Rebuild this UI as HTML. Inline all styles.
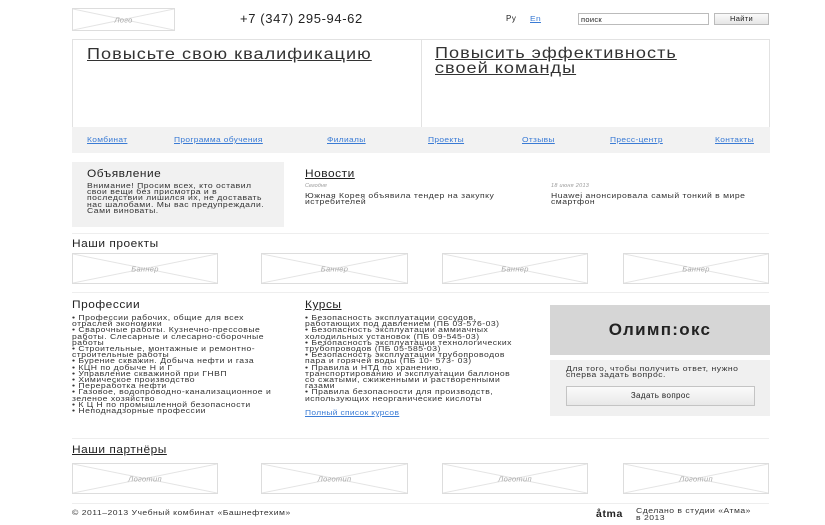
<!DOCTYPE html>
<html><head><meta charset="utf-8"><style>
*{margin:0;padding:0;box-sizing:border-box}
body{width:825px;height:525px;background:#fff;font-family:"Liberation Sans",Arial,sans-serif;color:#222;position:relative;overflow:hidden}
.a{position:absolute;white-space:nowrap}
.ph{position:absolute;border:1px solid #ddd}
.ph svg{position:absolute;left:0;top:0;width:100%;height:100%}
.ph span{position:absolute;left:0;right:0;top:50%;transform:translateY(-50%);text-align:center;font-style:italic;font-size:7.5px;letter-spacing:.3px;color:#aaa}
.nav{font-size:7.5px;letter-spacing:.3px;color:#3a7bd5;text-decoration:underline;transform:scaleX(1.12);transform-origin:0 0}
.line{position:absolute;left:72px;width:697px;height:1px;background:#eee}
.lst{position:absolute;font-size:7px;letter-spacing:.4px;line-height:6.2px;color:#333;white-space:nowrap;transform:scaleX(1.23);transform-origin:0 0}
.h{position:absolute;font-size:11px;letter-spacing:.5px;white-space:nowrap;transform:scaleX(1.08);transform-origin:0 0}
</style></head><body>
<div class="ph" style="left:72px;top:8px;width:103px;height:23px"><svg viewBox="0 0 100 100" preserveAspectRatio="none"><path d="M0 0L100 100M100 0L0 100" stroke="#e4e4e4" stroke-width="1" vector-effect="non-scaling-stroke"/></svg><span>Лого</span></div>
<div class="a" style="left:240px;top:12px;font-size:12.5px;letter-spacing:.6px;transform:scaleX(1.04);transform-origin:0 0">+7 (347) 295-94-62</div>
<div class="a" style="left:506px;top:14px;font-size:8px;letter-spacing:.5px">Ру</div>
<div class="a nav" style="left:530px;top:14px">En</div>
<div class="a" style="left:578px;top:13px;width:131px;height:12px;border:1px solid #bbb;font-size:7.5px;letter-spacing:.3px;padding:1px 2px">поиск</div>
<div class="a" style="left:714px;top:13px;width:55px;height:12px;border:1px solid #bbb;background:linear-gradient(#fafafa,#e6e6e6);font-size:7.5px;letter-spacing:.3px;text-align:center;line-height:10px">Найти</div>
<div class="a" style="left:72px;top:39px;width:698px;height:89px;border:1px solid #e2e2e2"></div>
<div class="a" style="left:421px;top:39px;width:1px;height:89px;background:#e2e2e2"></div>
<div class="a" style="left:87px;top:46px;font-size:16px;letter-spacing:.9px;text-decoration:underline;color:#333;transform:scaleX(1.13);transform-origin:0 0">Повысьте свою квалификацию</div>
<div class="a" style="left:435px;top:46px;font-size:16px;letter-spacing:.9px;text-decoration:underline;color:#333;line-height:15px;transform:scaleX(1.13);transform-origin:0 0">Повысить эффективность<br>своей команды</div>
<div class="a" style="left:72px;top:127px;width:698px;height:26px;background:#f2f2f2"></div>
<div class="a nav" style="left:87px;top:135px">Комбинат</div>
<div class="a nav" style="left:174px;top:135px">Программа обучения</div>
<div class="a nav" style="left:327px;top:135px">Филиалы</div>
<div class="a nav" style="left:428px;top:135px">Проекты</div>
<div class="a nav" style="left:522px;top:135px">Отзывы</div>
<div class="a nav" style="left:610px;top:135px">Пресс-центр</div>
<div class="a nav" style="left:715px;top:135px">Контакты</div>
<div class="a" style="left:72px;top:162px;width:212px;height:65px;background:#f1f1f1"></div>
<div class="h" style="left:87px;top:168px">Объявление</div>
<div class="lst" style="left:87px;top:184px">Внимание! Просим всех, кто оставил<br>свои вещи без присмотра и в<br>последствии лишился их, не доставать<br>нас шалобами. Мы вас предупреждали.<br>Сами виноваты.</div>
<div class="h" style="left:305px;top:168px;text-decoration:underline">Новости</div>
<div class="a" style="left:305px;top:183px;font-size:5.5px;font-style:italic;color:#999">Сегодня</div>
<div class="a" style="left:551px;top:183px;font-size:5.5px;font-style:italic;color:#999;letter-spacing:.3px">18 июня 2013</div>
<div class="lst" style="left:305px;top:194px">Южная Корея объявила тендер на закупку<br>истребителей</div>
<div class="lst" style="left:551px;top:194px">Huawei анонсировала самый тонкий в мире<br>смартфон</div>
<div class="line" style="top:233px"></div>
<div class="h" style="left:72px;top:238px">Наши проекты</div>
<div class="ph" style="left:72px;top:253px;width:146px;height:31px"><svg viewBox="0 0 100 100" preserveAspectRatio="none"><path d="M0 0L100 100M100 0L0 100" stroke="#e4e4e4" vector-effect="non-scaling-stroke"/></svg><span>Баннер</span></div>
<div class="ph" style="left:261px;top:253px;width:147px;height:31px"><svg viewBox="0 0 100 100" preserveAspectRatio="none"><path d="M0 0L100 100M100 0L0 100" stroke="#e4e4e4" vector-effect="non-scaling-stroke"/></svg><span>Баннер</span></div>
<div class="ph" style="left:442px;top:253px;width:146px;height:31px"><svg viewBox="0 0 100 100" preserveAspectRatio="none"><path d="M0 0L100 100M100 0L0 100" stroke="#e4e4e4" vector-effect="non-scaling-stroke"/></svg><span>Баннер</span></div>
<div class="ph" style="left:623px;top:253px;width:146px;height:31px"><svg viewBox="0 0 100 100" preserveAspectRatio="none"><path d="M0 0L100 100M100 0L0 100" stroke="#e4e4e4" vector-effect="non-scaling-stroke"/></svg><span>Баннер</span></div>
<div class="line" style="top:292px"></div>
<div class="h" style="left:72px;top:299px">Профессии</div>
<div class="lst" style="left:72px;top:316px">• Профессии рабочих, общие для всех<br>отраслей экономики<br>• Сварочные работы. Кузнечно-прессовые<br>работы. Слесарные и слесарно-сборочные<br>работы<br>• Строительные, монтажные и ремонтно-<br>строительные работы<br>• Бурение скважин. Добыча нефти и газа<br>• КЦН по добыче Н и Г<br>• Управление скважиной при ГНВП<br>• Химическое производство<br>• Переработка нефти<br>• Газовое, водопроводно-канализационное и<br>зеленое хозяйство<br>• К Ц Н по промышленной безопасности<br>• Неподнадзорные профессии</div>
<div class="h" style="left:305px;top:299px;text-decoration:underline">Курсы</div>
<div class="lst" style="left:305px;top:316px">• Безопасность эксплуатации сосудов,<br>работающих под давлением (ПБ 03-576-03)<br>• Безопасность эксплуатации аммиачных<br>холодильных установок (ПБ 09-545-03)<br>• Безопасность эксплуатации технологических<br>трубопроводов (ПБ 05-585-03)<br>• Безопасность эксплуатации трубопроводов<br>пара и горячей воды (ПБ 10- 573- 03)<br>• Правила и НТД по хранению,<br>транспортированию и эксплуатации баллонов<br>со сжатыми, сжиженными и растворенными<br>газами<br>• Правила безопасности для производств,<br>использующих неорганические кислоты</div>
<div class="a nav" style="left:305px;top:408px">Полный список курсов</div>
<div class="a" style="left:550px;top:305px;width:220px;height:50px;background:#d6d6d6;text-align:center;font-weight:bold;font-size:17px;letter-spacing:1.3px;line-height:50px">Олимп:окс</div>
<div class="a" style="left:550px;top:360px;width:220px;height:56px;background:#f0f0f0"></div>
<div class="lst" style="left:566px;top:367px">Для того, чтобы получить ответ, нужно<br>сперва задать вопрос.</div>
<div class="a" style="left:566px;top:386px;width:189px;height:20px;border:1px solid #c4c4c4;background:linear-gradient(#fbfbfb,#e8e8e8);font-size:8px;letter-spacing:.4px;text-align:center;line-height:18px">Задать вопрос</div>
<div class="line" style="top:438px"></div>
<div class="h" style="left:72px;top:444px;text-decoration:underline">Наши партнёры</div>
<div class="ph" style="left:72px;top:463px;width:146px;height:31px"><svg viewBox="0 0 100 100" preserveAspectRatio="none"><path d="M0 0L100 100M100 0L0 100" stroke="#e4e4e4" vector-effect="non-scaling-stroke"/></svg><span>Логотип</span></div>
<div class="ph" style="left:261px;top:463px;width:147px;height:31px"><svg viewBox="0 0 100 100" preserveAspectRatio="none"><path d="M0 0L100 100M100 0L0 100" stroke="#e4e4e4" vector-effect="non-scaling-stroke"/></svg><span>Логотип</span></div>
<div class="ph" style="left:442px;top:463px;width:146px;height:31px"><svg viewBox="0 0 100 100" preserveAspectRatio="none"><path d="M0 0L100 100M100 0L0 100" stroke="#e4e4e4" vector-effect="non-scaling-stroke"/></svg><span>Логотип</span></div>
<div class="ph" style="left:623px;top:463px;width:146px;height:31px"><svg viewBox="0 0 100 100" preserveAspectRatio="none"><path d="M0 0L100 100M100 0L0 100" stroke="#e4e4e4" vector-effect="non-scaling-stroke"/></svg><span>Логотип</span></div>
<div class="line" style="top:503px"></div>
<div class="lst" style="left:72px;top:511px">© 2011–2013 Учебный комбинат «Башнефтехим»</div>
<div class="a" style="left:596px;top:508px;font-size:10.5px;font-weight:bold;letter-spacing:.6px">åtma</div>
<div class="lst" style="left:636px;top:509px;line-height:6.5px">Сделано в студии «Атма»<br>в 2013</div>
</body></html>
